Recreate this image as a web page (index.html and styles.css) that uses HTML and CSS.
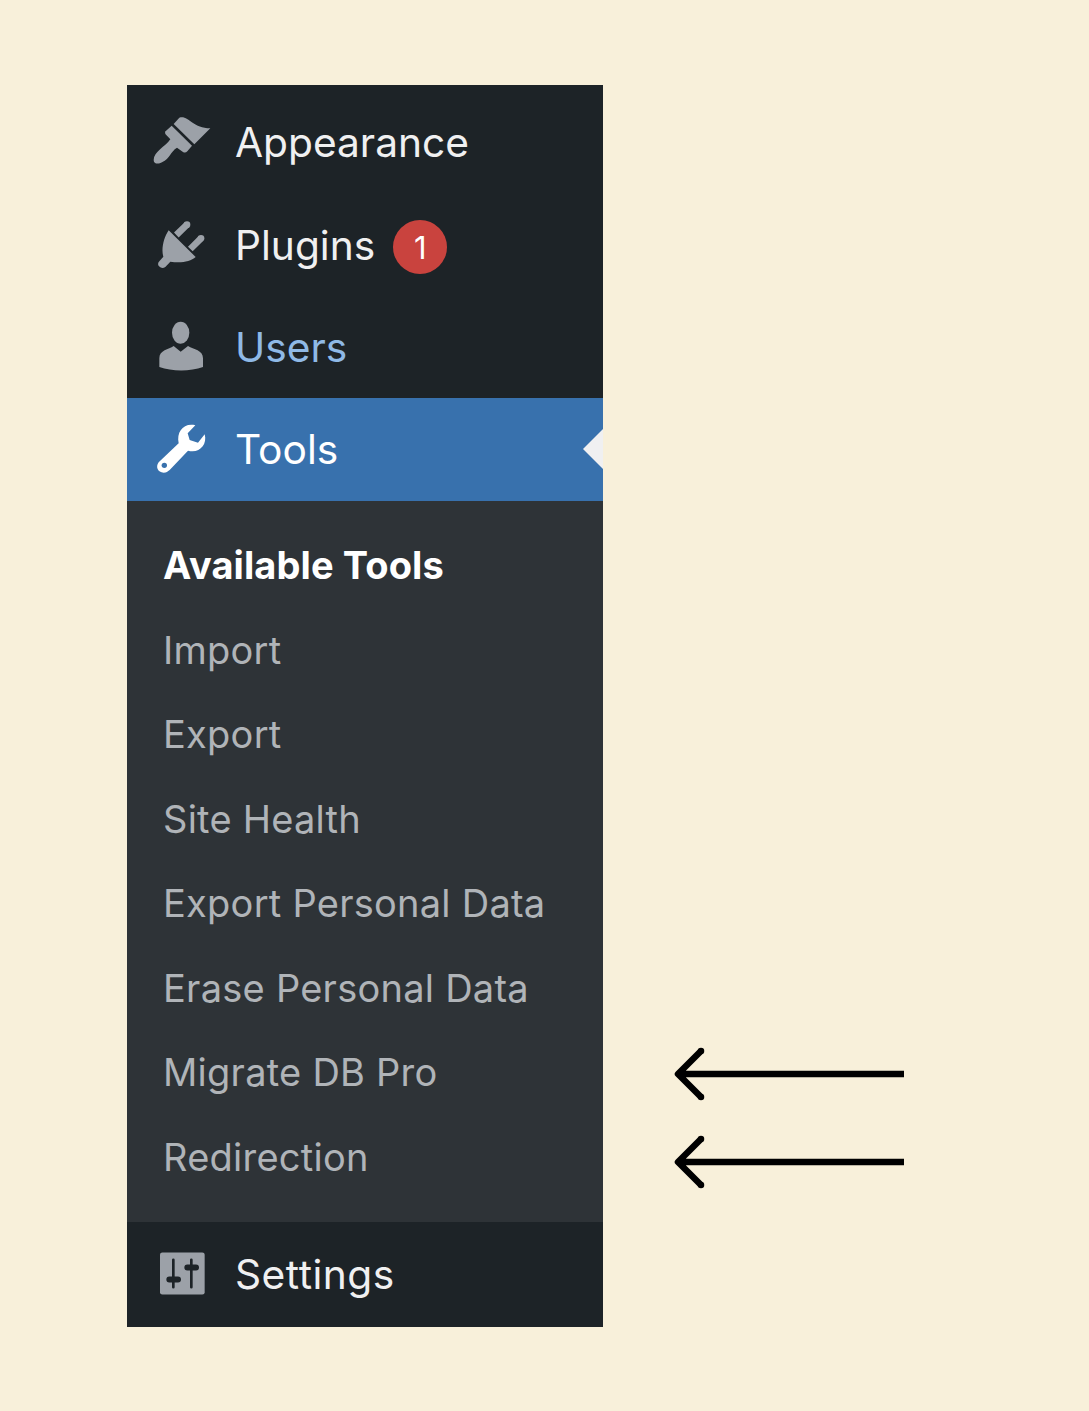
FILE: index.html
```html
<!DOCTYPE html>
<html lang="en">
<head>
<meta charset="utf-8">
<title>Tools menu</title>
<link rel="stylesheet" href="styles.css">
</head>
<body>
<main class="page">
  <nav class="sidebar">
    <a class="item item-first">
      <span class="icon-slot">
        <svg class="icon" viewBox="0 0 180 156" width="60" height="52"><g transform="translate(-75 -96)" fill="#9ca1a8"><path d="M140 117 L157 98 C185 90 195 130 250 130 L202 178 Z"/><path d="M134 122 L114 140 Q113 148 120 152 L130 163 C115 185 80 200 80 225 C80 238 95 238 105 232 C130 220 130 200 150 188 L168 201 Q175 205 181 199 L195 182 Z"/></g></svg>
      </span>
      <span class="label">Appearance</span>
    </a>
    <a class="item item-plugins">
      <span class="icon-slot">
        <svg class="icon" viewBox="0 0 180 150" width="60" height="50"><g transform="translate(-75 -405)" fill="#9ca1a8"><path d="M125 433 L206 513 C190 528 160 532 130 527 L115 543 Q105 550 96 541 Q90 533 97 526 L109 512 C102 490 110 455 125 433 Z"/><path d="M148 447 L180 416 M190 489 L222 457" stroke="#9ca1a8" stroke-width="20" fill="none"/><circle cx="180" cy="416" r="10"/><circle cx="222" cy="457" r="10"/></g></svg>
      </span>
      <span class="label">Plugins</span>
      <span class="badge">1</span>
    </a>
    <a class="item item-users">
      <span class="icon-slot">
        <svg class="icon" viewBox="0 0 180 165" width="60" height="55"><g transform="translate(-75 -60)" fill="#9ca1a8"><ellipse cx="161" cy="98" rx="26" ry="33"/><path d="M97 201 L97 175 C97 150 125 148 140 138 L161 155 L183 138 C200 148 228 150 228 175 L228 201 C190 215 135 215 97 201 Z"/></g></svg>
      </span>
      <span class="label">Users</span>
    </a>
    <a class="item item-current">
      <span class="icon-slot">
        <svg class="icon" viewBox="0 0 180 165" width="60" height="55"><g transform="translate(-75 -366)"><path fill="#fff" d="M205 376 C170 368 148 395 155 430 L95 487 C85 500 92 518 110 518 C118 518 122 515 128 510 L183 452 C215 462 242 435 233 403 L213 428 L188 420 L182 400 Z"/><circle cx="112" cy="496" r="8" fill="#3871ad"/></g></svg>
      </span>
      <span class="label">Tools</span>
      <span class="pointer"></span>
    </a>
    <ul class="submenu">
      <li class="sub-current">Available Tools</li>
      <li>Import</li>
      <li>Export</li>
      <li>Site Health</li>
      <li>Export Personal Data</li>
      <li>Erase Personal Data</li>
      <li>Migrate DB Pro</li>
      <li>Redirection</li>
    </ul>
    <a class="item item-last">
      <span class="icon-slot">
        <svg class="icon" viewBox="0 0 180 150" width="60" height="50"><g transform="translate(-75 -118.5)"><rect x="99" y="126" width="134" height="126" rx="7" fill="#9ca1a8"/><g fill="none" stroke="#1d2327" stroke-linecap="round"><path d="M139 148 V230 M193 148 V230" stroke-width="8"/><path d="M127 207 H153 M181 171 H207" stroke-width="18"/></g></g></svg>
      </span>
      <span class="label">Settings</span>
    </a>
  </nav>
  <div class="arrows">
    <svg class="arrow" viewBox="0 0 232 56" width="232" height="56"><path d="M232 28 H6 M29 5 L6 28 L29 51" fill="none" stroke="#000" stroke-width="6.5" stroke-linejoin="round"/><circle cx="29" cy="5" r="3.25"/><circle cx="29" cy="51" r="3.25"/></svg>
    <svg class="arrow" viewBox="0 0 232 56" width="232" height="56"><path d="M232 28 H6 M29 5 L6 28 L29 51" fill="none" stroke="#000" stroke-width="6.5" stroke-linejoin="round"/><circle cx="29" cy="5" r="3.25"/><circle cx="29" cy="51" r="3.25"/></svg>
  </div>
</main>
</body>
</html>
```
FILE: styles.css
```css
* { box-sizing: border-box; }
html, body { margin: 0; height: 100%; }
body { background: #f8f0da; font-family: Inter, "Liberation Sans", sans-serif; }
.page { display: flex; align-items: flex-start; height: 1411px; padding: 85px 0 0 127px; overflow: hidden; }
.sidebar { width: 476px; background: #1d2327; display: flex; flex-direction: column; }
.item { position: relative; display: flex; align-items: center; color: #f0f0f1; font-size: 40.7px; line-height: 1; }
.item-first { height: 110px; padding-top: 6px; }
.item-plugins { height: 102px; }
.item-users { height: 101px; color: #8fb9e6; }
.item-users .label, .item-last .label, .item-current .label { padding-top: 2px; }
.item-current { background: #3871ad; color: #fff; height: 103px; }
.item-last { height: 105px; }
.item-last .label { letter-spacing: 0.5px; }
.icon-slot { width: 108px; display: flex; flex: none; padding-left: 25px; }
.icon { display: block; }
.badge { width: 54px; height: 54px; margin: 2px 0 0 18px; border-radius: 50%; background: #c9433e; color: #fff; font-size: 31px; display: flex; align-items: center; justify-content: center; }
.pointer { position: absolute; right: 0; top: 31px; width: 0; height: 0; border: 20px solid transparent; border-left-width: 0; border-right-color: #f0f0f1; }
.submenu { list-style: none; margin: 0; padding: 22px 0 23px 36px; background: #2e3337; color: #b0b4b8; font-size: 38px; letter-spacing: 0.25px; }
.submenu li { height: 84.5px; display: flex; align-items: center; }
.sub-current { color: #fff; font-weight: 700; letter-spacing: 0.1px; }
.arrows { display: flex; flex-direction: column; gap: 32px; margin: 961px 0 0 69px; }
.arrow { display: block; }
```
